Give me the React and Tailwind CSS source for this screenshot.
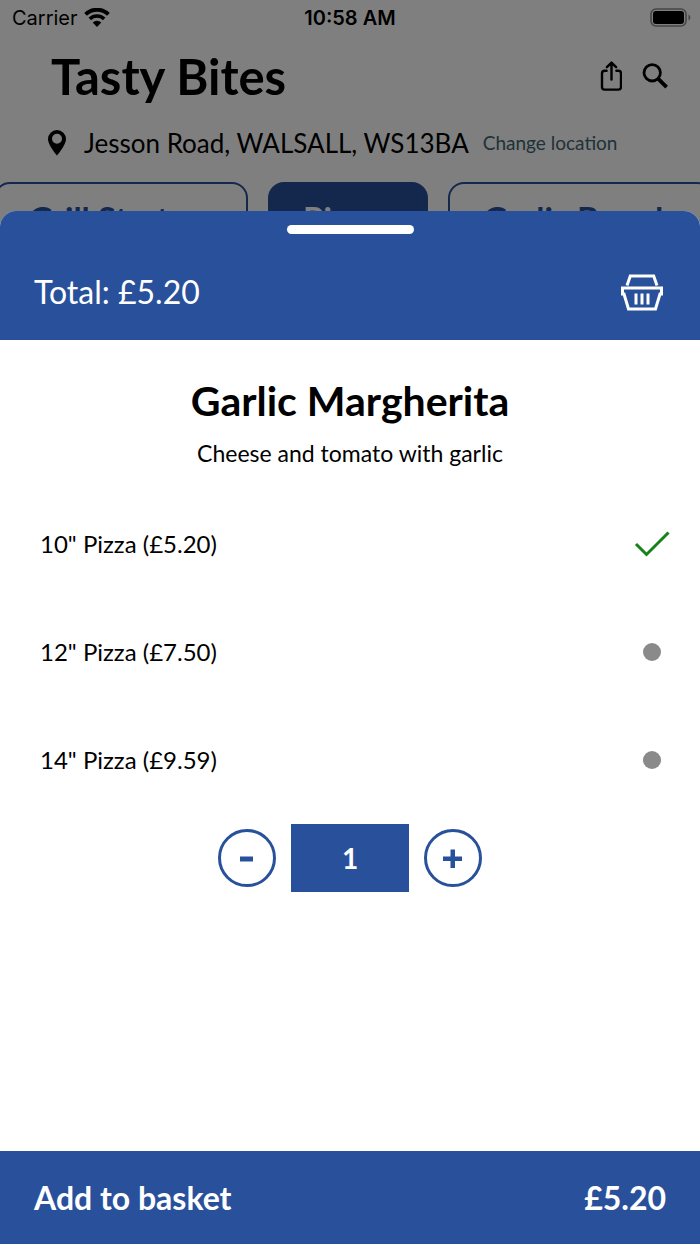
import { useState } from 'react'

const categories = ['Grill Starters', 'Pizzas', 'Garlic Breads']

const sizes = [
  { id: 'ten', label: '10" Pizza', price: 5.2 },
  { id: 'twelve', label: '12" Pizza', price: 7.5 },
  { id: 'fourteen', label: '14" Pizza', price: 9.59 },
]

const money = (n) => `£${n.toFixed(2)}`

function StatusBar() {
  return (
    <div className="grid grid-cols-3 items-center h-9 px-3 font-['Inter',sans-serif] text-xl">
      <div className="flex items-center gap-1.5">
        <span>Carrier</span>
        <svg width="26" height="20" viewBox="0 0 26 20" fill="none" stroke="currentColor" strokeWidth="4" aria-hidden="true">
          <path d="M1.6 6.4a16.4 16.4 0 0 1 22.8 0" />
          <path d="M5.8 10.9a10.4 10.4 0 0 1 14.4 0" strokeWidth="3.6" />
          <path d="M8.7 14.6a6.2 6.2 0 0 1 8.6 0L13 19z" fill="currentColor" stroke="none" />
        </svg>
      </div>
      <span className="text-center font-semibold">10:58 AM</span>
      <svg className="justify-self-end -mr-1" width="42" height="20" viewBox="0 0 42 20" aria-hidden="true">
        <rect x="1" y="1" width="35" height="17" rx="5" fill="none" stroke="#000" strokeOpacity=".45" strokeWidth="1.6" />
        <rect x="3" y="3" width="31" height="13" rx="3" />
        <path d="M38.5 6.5c2.4 1 2.4 5 0 6z" fillOpacity=".45" />
      </svg>
    </div>
  )
}

function BasketIcon() {
  return (
    <svg width="42" height="38" viewBox="0 0 42 38" fill="none" stroke="currentColor" strokeWidth="3" aria-hidden="true">
      <path d="M6 12.5 9.3 3h23.4L36 12.5" />
      <path d="M1.5 15h39v6H39L34.5 36h-27L3 21H1.5z" />
      <path d="M15 20.500v11M21 20.500v11M27 20.500v11" />
    </svg>
  )
}

function RoundButton({ label, onClick, children }) {
  return (
    <button type="button" aria-label={label} onClick={onClick}
      className="flex items-center justify-center size-[58px] rounded-full border-3 border-[#29519b] text-[#29519b]">
      <svg width="20" height="20" viewBox="0 0 20 20" fill="currentColor" aria-hidden="true">{children}</svg>
    </button>
  )
}

export default function App() {
  const [size, setSize] = useState('ten')
  const [qty, setQty] = useState(1)

  const total = sizes.find((s) => s.id === size).price * qty

  return (
    <div className="min-h-screen flex flex-col overflow-hidden bg-white text-black font-['Lato',sans-serif]">
      {/* Restaurant page, dimmed behind the sheet */}
      <div className="relative">
        <StatusBar />

        <header className="flex items-center justify-between h-20 pl-[51px] pr-8">
          <h1 className="text-[49px] leading-none font-bold">Tasty Bites</h1>
          <div className="flex items-center gap-5">
            <button type="button" aria-label="Share">
              <svg width="22" height="30" viewBox="0 0 22 30" fill="none" stroke="currentColor" strokeWidth="2.4" strokeLinecap="round" strokeLinejoin="round">
                <path d="M6.6 9.8H4.6A2.6 2.6 0 0 0 2 12.4V26a2.6 2.6 0 0 0 2.6 2.600h13.800A2.6 2.6 0 0 0 21 26V12.4a2.6 2.6 0 0 0-2.600-2.600h-2" />
                <path d="M11.500 18.5V1.6M6.900 6.2l4.600-4.600 4.600 4.600" />
              </svg>
            </button>
            <button type="button" aria-label="Search">
              <svg width="26" height="26" viewBox="0 0 26 26" fill="none" stroke="currentColor">
                <circle cx="10.2" cy="9.8" r="8.2" strokeWidth="2.8" />
                <path d="m16 15.6 8.6 8.6" strokeWidth="3.8" />
              </svg>
            </button>
          </div>
        </header>

        <div className="flex items-center h-[54px] pl-12">
          <svg width="18" height="26" viewBox="0 0 18 26" aria-hidden="true">
            <path fillRule="evenodd" d="M9 0a9 9 0 0 0-9 9c0 6.2 9 16.500 9 16.500S18 15.200 18 9a9 9 0 0 0-9-9zm0 3.800a5 5 0 1 1 0 10 5 5 0 0 1 0-10z" />
          </svg>
          <span className="ml-[18px] text-[26px]">Jesson Road, WALSALL, WS13BA</span>
          <a href="#location" className="ml-3.5 text-[19px] text-[#3f6470]">Change location</a>
        </div>

        <nav className="flex gap-5 -ml-1.5 mt-3">
          {categories.map((name) => (
            <button key={name} type="button"
              className={`shrink-0 h-[74px] px-[33px] rounded-2xl border-2 border-[#29519b] text-[33px] font-bold ${
                name === 'Pizzas' ? 'bg-[#29519b] text-white' : 'text-[#29519b]'
              }`}>
              {name}
            </button>
          ))}
        </nav>

        <div className="absolute inset-0 bg-black/50" />
      </div>

      {/* Item sheet */}
      <section className="relative grow flex flex-col -mt-[45px] rounded-t-2xl bg-white">
        <div className="h-[129px] rounded-t-2xl bg-[#29519b] text-white">
          <div className="h-[23px] pt-3.5">
            <div className="mx-auto w-[127px] h-[9px] rounded-full bg-white" />
          </div>
          <div className="flex items-center justify-between h-[116px] pl-[34px] pr-[37px]">
            <span className="text-[32px]">Total: {money(total)}</span>
            <BasketIcon />
          </div>
        </div>

        <div className="grow px-10">
          <div className="pt-[31px] text-center">
            <h2 className="text-[41px] leading-[60px] font-bold">Garlic Margherita</h2>
            <p className="text-[23px] leading-[44px]">Cheese and tomato with garlic</p>
          </div>

          <div role="radiogroup" aria-label="Size" className="mt-[15px]">
            {sizes.map((s) => (
              <label key={s.id} className="flex items-center justify-between h-[108px] text-2xl cursor-pointer">
                <span>{s.label} ({money(s.price)})</span>
                <input type="radio" name="size" className="sr-only" checked={size === s.id} onChange={() => setSize(s.id)} />
                <span className="flex justify-center w-9 -mr-[10px]">
                  {size === s.id ? (
                    <svg width="36" height="28" viewBox="0 0 36 28" fill="none" stroke="#158317" strokeWidth="3" aria-hidden="true">
                      <path d="M2 14 12.500 24.500 34.500 2.500" />
                    </svg>
                  ) : (
                    <span className="size-[18px] rounded-full bg-[#8a8a8a]" />
                  )}
                </span>
              </label>
            ))}
          </div>

          <div className="flex items-center justify-center gap-[15px] mt-2.5">
            <RoundButton label="Remove one" onClick={() => setQty(Math.max(1, qty - 1))}>
              <path d="M3 8.500h13v5H3z" />
            </RoundButton>
            <output className="flex items-center justify-center w-[118px] h-[68px] bg-[#29519b] text-white text-[28px] font-bold">
              {qty}
            </output>
            <RoundButton label="Add one" onClick={() => setQty(qty + 1)}>
              <path d="M7.500 1.500h4.500v7h7v4.500h-7v7H7.500v-7H0V8.500h7.500z" />
            </RoundButton>
          </div>
        </div>

        <button type="button" className="flex items-center justify-between h-[93px] px-[34px] bg-[#29519b] text-white text-[32px] font-bold">
          <span>Add to basket</span>
          <span>{money(total)}</span>
        </button>
      </section>
    </div>
  )
}
